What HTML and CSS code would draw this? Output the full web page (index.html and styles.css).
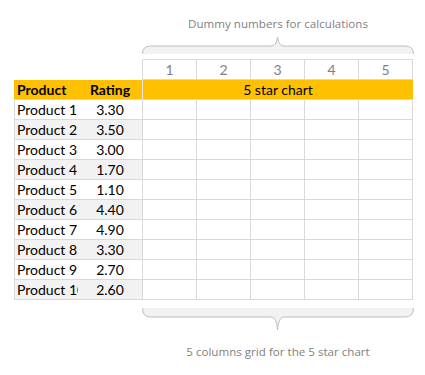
FILE: index.html
```html
<!DOCTYPE html>
<html lang="en">
<head>
  <meta charset="UTF-8">
  <meta name="viewport" content="width=device-width, initial-scale=1.0">
  <title>5 star chart grid</title>
  <link rel="stylesheet" href="styles.css">
</head>
<body>
  <div class="page">
    <div class="note note-top">Dummy numbers for calculations</div>
    <svg class="brace brace-top" width="272" height="24" viewBox="0 0 272 24">
      <path class="brace-fill" d="M0.5,22 Q0.5,14 8.5,14 L129,14 Q134.5,14 135.5,5 Q136.5,14 142,14 L263,14 Q271.5,14 271.5,22 Z"/>
      <path class="brace-line" d="M0.5,22 Q0.5,14 8.5,14 L129,14 Q134.5,14 135.5,5 Q136.5,14 142,14 L263,14 Q271.5,14 271.5,22"/>
    </svg>

    <div class="sheet">
      <div class="row nums">
        <div class="cell blank"></div>
        <div class="cell num">1</div>
        <div class="cell num">2</div>
        <div class="cell num">3</div>
        <div class="cell num">4</div>
        <div class="cell num">5</div>
      </div>
      <div class="row head">
        <div class="cell name">Product</div>
        <div class="cell rating">Rating</div>
        <div class="cell chart-title">5 star chart</div>
      </div>
    </div>

    <svg class="brace brace-bottom" width="272" height="28" viewBox="0 0 272 28">
      <path class="brace-fill" d="M0.5,3 Q0.5,12 8.5,12 L129,12 Q134.5,12 135.5,25 Q136.5,12 142,12 L263,12 Q271.5,12 271.5,3 Z"/>
      <path class="brace-line" d="M0.5,3 Q0.5,12 8.5,12 L129,12 Q134.5,12 135.5,25 Q136.5,12 142,12 L263,12 Q271.5,12 271.5,3"/>
    </svg>
    <div class="note note-bottom">5 columns grid for the 5 star chart</div>
  </div>

  <script>
    // Product ratings
    const products = [
      { name: 'Product 1', rating: 3.3 },
      { name: 'Product 2', rating: 3.5 },
      { name: 'Product 3', rating: 3.0 },
      { name: 'Product 4', rating: 1.7 },
      { name: 'Product 5', rating: 1.1 },
      { name: 'Product 6', rating: 4.4 },
      { name: 'Product 7', rating: 4.9 },
      { name: 'Product 8', rating: 3.3 },
      { name: 'Product 9', rating: 2.7 },
      { name: 'Product 10', rating: 2.6 }
    ];

    const sheet = document.querySelector('.sheet');

    products.forEach((p, i) => {
      const row = document.createElement('div');
      row.className = 'row data' + (i % 2 === 1 ? ' alt' : '');

      let html = '<div class="cell name">' + p.name + '</div>';
      html += '<div class="cell rating">' + p.rating.toFixed(2) + '</div>';
      for (let c = 0; c < 5; c++) {
        html += '<div class="cell star"></div>';
      }
      row.innerHTML = html;
      sheet.appendChild(row);
    });
  </script>
</body>
</html>
```

FILE: styles.css
```css
body {
  margin: 0;
  padding: 0;
  background-color: white;
  font-family: Lato, "Open Sans", sans-serif;
  color: #000;
}
.page {
  width: 425px;
  height: 375px;
}
.note {
  font-family: "Open Sans", sans-serif;
  font-size: 11.6px;
  line-height: 16px;
  color: #7f7f7f;
  text-align: center;
  width: 270px;
  margin-left: 143px;
}
.note-top {
  padding-top: 16px;
}
.note-bottom {
  padding-top: 11px;
}
.brace {
  display: block;
  margin-left: 142px;
}
.brace-bottom {
  margin-top: 5px;
}
.brace-fill {
  fill: #f2f2f2;
  stroke: none;
}
.brace-line {
  fill: none;
  stroke: #bfbfbf;
  stroke-width: 1;
}
.sheet {
  margin-top: 3px;
  margin-left: 14px;
  width: 399px;
  font-size: 14px;
}
.row {
  display: grid;
  grid-template-columns: 64px 65px repeat(5, 54px);
}
.cell {
  box-sizing: border-box;
  height: 20px;
  line-height: 19px;
  border-bottom: 1px solid #d9d9d9;
  white-space: nowrap;
  overflow: hidden;
}
.nums .cell {
  height: 21px;
  line-height: 20px;
}
.nums .blank {
  grid-column: span 2;
  border-bottom: none;
  border-right: 1px solid #d9d9d9;
}
.nums .num {
  border-top: 1px solid #d9d9d9;
  border-right: 1px solid #d9d9d9;
  color: #7f7f7f;
  text-align: center;
}
.head .cell {
  background-color: #ffc000;
  font-weight: bold;
}
.head .name {
  padding-left: 3px;
}
.head .rating {
  text-align: center;
  border-right: 1px solid #e3e3e3;
}
.head .chart-title {
  grid-column: span 5;
  font-weight: normal;
  text-align: center;
}
.data .name {
  border-left: 1px solid #d9d9d9;
  padding-left: 2px;
}
.data .rating {
  text-align: center;
  border-right: 1px solid #d9d9d9;
}
.data .star {
  border-right: 1px solid #d9d9d9;
}
.alt .name, .alt .rating {
  background-color: #f2f2f2;
}
```
